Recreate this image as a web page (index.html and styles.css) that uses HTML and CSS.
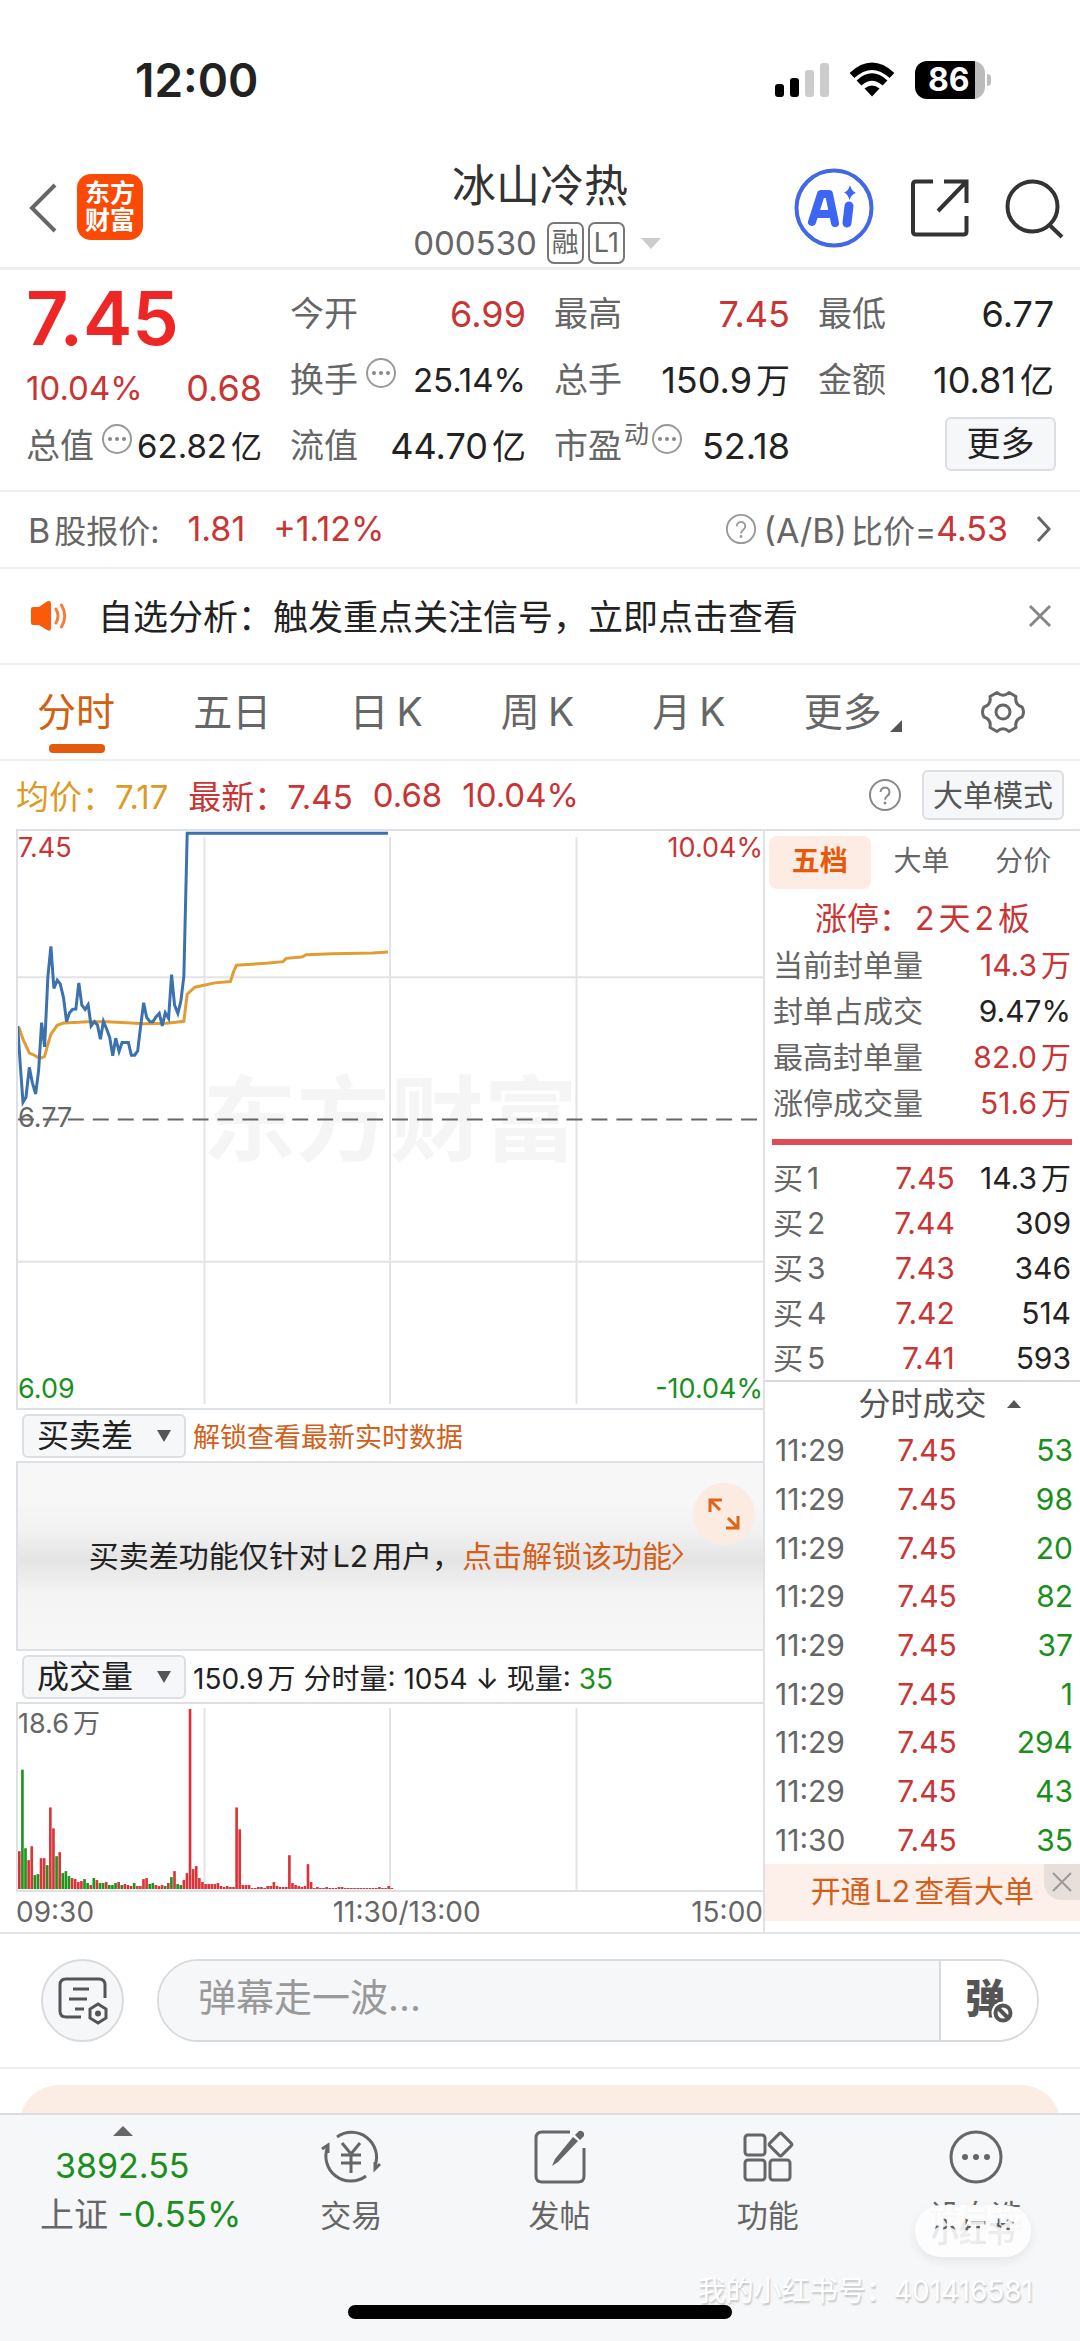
FILE: index.html
```html
<!DOCTYPE html>
<html lang="zh-CN">
<head>
<meta charset="utf-8">
<meta name="viewport" content="width=device-width, initial-scale=1">
<title>冰山冷热 000530</title>
<link rel="stylesheet" href="styles.css">
</head>
<body>
<svg class="defs" width="0" height="0" aria-hidden="true">
  <symbol id="dots" viewBox="0 0 32 32"><circle cx="16" cy="16" r="14" fill="none" stroke="#999" stroke-width="2"/><circle cx="9" cy="16" r="2" fill="#888"/><circle cx="16" cy="16" r="2" fill="#888"/><circle cx="23" cy="16" r="2" fill="#888"/></symbol>
  <symbol id="help" viewBox="0 0 34 34"><circle cx="17" cy="17" r="15" fill="none" stroke="currentColor" stroke-width="2"/><path d="M12.500 14a4.500 4.500 0 1 1 7 3.700c-1.700 1.200-2.500 2-2.500 4" fill="none" stroke="currentColor" stroke-width="2"/><circle cx="17" cy="25" r="1.500" fill="currentColor"/></symbol>
</svg>
<div class="page">
  <div class="status">
    <span class="clock">12:00</span>
    <div class="status-icons">
      <svg width="54" height="36" viewBox="0 0 54 36"><rect x="0" y="22" width="9" height="13" rx="3"/><rect x="15" y="16" width="9" height="19" rx="3"/><rect x="30" y="8" width="9" height="27" rx="3" fill="#ccc"/><rect x="45" y="1" width="9" height="34" rx="3" fill="#ccc"/></svg>
      <svg width="46" height="36" viewBox="0 0 46 36"><g fill="none" stroke="#000" stroke-width="7"><path d="M3 13.500Q23 -5 43 13.500"/><path d="M10 21Q23 9 36 21"/></g><path d="M15.500 26.500Q23 20.500 30.500 26.500L23 34.500Z"/></svg>
      <span class="battery"><span>86</span></span>
    </div>
  </div>

  <header class="head">
    <div class="head-left">
      <button class="icon-btn" aria-label="返回"><svg width="30" height="52" viewBox="0 0 30 52"><path d="M27 3L4 26L27 49" fill="none" stroke="#666" stroke-width="4"/></svg></button>
      <div class="logo"><span>东方</span><span>财富</span></div>
    </div>
    <div class="head-mid">
      <h1>冰山冷热</h1>
      <div class="code"><span>000530</span><span class="badges"><i>融</i><i>L1</i></span><svg width="20" height="11" viewBox="0 0 20 11"><path d="M0 0H20L10 11Z" fill="#ccc"/></svg></div>
    </div>
    <div class="head-right">
      <button class="icon-btn" aria-label="AI"><svg width="82" height="82" viewBox="0 0 82 82"><circle cx="41" cy="41" r="37.500" fill="none" stroke="#4169e6" stroke-width="4"/><path d="M19 55L28 27H36L42 56M24.500 47H37" fill="none" stroke="#3d66f5" stroke-width="8" stroke-linejoin="round" stroke-linecap="round"/><path d="M56 39L54 56" stroke="#3d66f5" stroke-width="9" stroke-linecap="round"/><path d="M57 18Q58.500 24 63 26Q58.500 27 56.500 33Q55 27 51 25.500Q55.500 24 57 18Z" fill="#3d66f5"/></svg></button>
      <button class="icon-btn" aria-label="分享"><svg width="58" height="58" viewBox="0 0 58 58"><path d="M22 2.500H5Q2 2.500 2 5.500V52.500Q2 55.500 5 55.500H52.500Q55.500 55.500 55.500 52.500V37M33 2.500H55.500V24M55.500 2.500L27 32" fill="none" stroke="#333" stroke-width="4"/></svg></button>
      <button class="icon-btn" aria-label="搜索"><svg width="60" height="60" viewBox="0 0 60 60"><circle cx="27.500" cy="27.500" r="25" fill="none" stroke="#333" stroke-width="4"/><path d="M44.500 46L57 58" stroke="#333" stroke-width="4"/></svg></button>
    </div>
  </header>

  <section class="quote">
    <div class="main-price"><strong>7.45</strong><div class="chg red"><span>10.04%</span><b>0.68</b></div></div>
    <div class="q"><span>今开</span><b class="red">6.99</b></div>
    <div class="q"><span>最高</span><b class="red">7.45</b></div>
    <div class="q"><span>最低</span><b>6.77</b></div>
    <div class="q"><span>换手<svg class="dots"><use href="#dots"/></svg></span><b class="small">25.14%</b></div>
    <div class="q"><span>总手</span><b>150.9<em>万</em></b></div>
    <div class="q"><span>金额</span><b>10.81<em>亿</em></b></div>
    <div class="q"><span>总值<svg class="dots"><use href="#dots"/></svg></span><b class="small">62.82<em>亿</em></b></div>
    <div class="q"><span>流值</span><b>44.70<em>亿</em></b></div>
    <div class="q pe"><span>市盈<sup>动</sup><svg class="dots"><use href="#dots"/></svg></span><b>52.18</b></div>
    <div class="q end"><button class="box-btn more">更多</button></div>
  </section>

  <section class="bshare">
    <span>B<em>股报价:</em></span><b class="red">1.81</b><b class="red">+1.12%</b>
    <a href="#" class="ratio"><svg class="help"><use href="#help"/></svg><span>(A/B)<em>比价=</em></span><b class="red">4.53</b><svg class="chev" width="16" height="28" viewBox="0 0 16 28"><path d="M2 2L13 14L2 26" fill="none" stroke="#666" stroke-width="3"/></svg></a>
  </section>

  <section class="notice">
    <svg width="38" height="32" viewBox="0 0 38 32"><path d="M1 9Q1 7 3 7H9L17 1.500Q21 0 21 4V28Q21 32 17 30L9 25H3Q1 25 1 23Z" fill="#fa5a0a"/><path d="M26 9Q30 16 26 23M31.500 5Q38 16 31.500 27" fill="none" stroke="#fa7a3a" stroke-width="3" stroke-linecap="round"/></svg>
    <p>自选分析：触发重点关注信号，立即点击查看</p>
    <button class="icon-btn" aria-label="关闭"><svg width="24" height="24" viewBox="0 0 24 24"><path d="M2 2L22 22M22 2L2 22" stroke="#888" stroke-width="3"/></svg></button>
  </section>

  <nav class="tabs">
    <a href="#" class="on">分时</a><a href="#">五日</a><a href="#">日<em>K</em></a><a href="#">周<em>K</em></a><a href="#">月<em>K</em></a><a href="#" class="tab-more">更多<svg width="12" height="12" viewBox="0 0 12 12"><path d="M12 0V12H0Z" fill="#555"/></svg></a>
    <button class="icon-btn" aria-label="设置"><svg width="46" height="44" viewBox="0 0 46 44"><path d="M17 2.500Q23 8 29 2.500L36 6.500Q34.500 14.500 42 17Q45 22 42 27Q34.500 29.500 36 37.500L29 41.500Q23 36 17 41.500L10 37.500Q11.500 29.500 4 27Q1 22 4 17Q11.500 14.500 10 6.500Z" fill="none" stroke="#666" stroke-width="3" stroke-linejoin="round"/><circle cx="23" cy="22" r="7" fill="none" stroke="#666" stroke-width="3"/></svg></button>
  </nav>

  <section class="info">
    <span class="avg">均价：7.17</span><span class="red">最新：<em>7.45</em></span><span class="red">0.68</span><span class="red">10.04%</span>
    <svg class="help dark"><use href="#help"/></svg>
    <button class="box-btn mode">大单模式</button>
  </section>

  <section class="board">
    <div class="charts">
      <div class="price">
        <svg viewBox="0 0 747 580" preserveAspectRatio="none">
          <text x="373" y="325" class="mark">东方财富</text>
          <path d="M0 147H747M0 433H747M187 6V576M373 6V576M560 6V576" stroke="#e1e4e8" stroke-width="2"/>
          <path d="M0 290H747" stroke="#666" stroke-width="2" stroke-dasharray="16 9"/>
          <g transform="scale(.3333) translate(-53 -32)" fill="none" stroke-width="9" stroke-linejoin="miter">
            <polyline stroke="#e29c34" points="55,622 68,660 87,702 100,707 115,716 124,716 133,712 143,675 152,645 171,618 190,611 236,609 260,607 320,607 380,610 430,613 500,612 552,606 562,524 585,503 645,490 692,486 702,455 710,437 800,431 850,426 860,416 907,412 920,405 1000,402 1120,400 1166,397"/>
            <polyline stroke="#3b72ad" points="52,620 60,740 68,850 77,835 87,745 96,790 106,825 115,755 124,610 133,683 143,470 152,380 161,507 171,482 180,493 190,535 199,607 208,580 217,570 227,569 236,490 245,557 255,570 264,556 273,620 283,607 292,617 301,660 310,606 320,630 329,655 338,710 347,657 357,697 366,670 385,670 394,708 404,708 413,695 422,620 431,550 440,594 450,607 459,607 468,593 478,582 487,620 496,580 506,597 515,465 524,557 534,582 543,545 552,470 562,39 1166,39"/>
          </g>
        </svg>
        <span class="lab tl red">7.45</span><span class="lab tr red">10.04%</span>
        <span class="lab ml">6.77</span>
        <span class="lab bl green">6.09</span><span class="lab br green">-10.04%</span>
      </div>
      <div class="bar-row"><button class="box-btn drop">买卖差<svg width="14" height="12" viewBox="0 0 14 12"><path d="M0 0H14L7 12Z" fill="#555"/></svg></button><a href="#" class="orange">解锁查看最新实时数据</a></div>
      <div class="locked">
        <p>买卖差功能仅针对<em>L2</em>用户，<a href="#" class="orange">点击解锁该功能<svg width="12" height="24" viewBox="0 0 12 24"><path d="M1 2L10 12L1 22" fill="none" stroke="#d9601a" stroke-width="2"/></svg></a></p>
        <button class="expand" aria-label="展开"><svg width="36" height="36" viewBox="0 0 36 36"><path d="M4 16V4H16M4 4L14 14M32 20V32H20M32 32L22 22" fill="none" stroke="#e0651c" stroke-width="3"/></svg></button>
      </div>
      <div class="bar-row totals"><button class="box-btn drop">成交量<svg width="14" height="12" viewBox="0 0 14 12"><path d="M0 0H14L7 12Z" fill="#555"/></svg></button><span>150.9<em>万</em> 分时量: 1054 ↓ 现量: <span class="green">35</span></span></div>
      <div class="volume">
        <svg id="volume" viewBox="0 0 747 187" preserveAspectRatio="none"><path d="M187 4V187M373 4V187M560 4V187" stroke="#e1e4e8" stroke-width="2"/></svg>
        <span class="lab tl">18.6<em>万</em></span>
      </div>
      <div class="axis"><span>09:30</span><span class="noon">11:30/13:00</span><span>15:00</span></div>
    </div>

    <aside class="side">
      <div class="side-tabs"><button class="on">五档</button><button>大单</button><button>分价</button></div>
      <p class="limit red">涨停：<em>2</em>天<em>2</em>板</p>
      <table class="seal">
        <tr><th>当前封单量</th><td class="red">14.3<em>万</em></td></tr>
        <tr><th>封单占成交</th><td>9.47%</td></tr>
        <tr><th>最高封单量</th><td class="red">82.0<em>万</em></td></tr>
        <tr><th>涨停成交量</th><td class="red">51.6<em>万</em></td></tr>
      </table>
      <hr>
      <table class="bids">
        <tr><th>买<em>1</em></th><td class="red">7.45</td><td>14.3<em>万</em></td></tr>
        <tr><th>买<em>2</em></th><td class="red">7.44</td><td>309</td></tr>
        <tr><th>买<em>3</em></th><td class="red">7.43</td><td>346</td></tr>
        <tr><th>买<em>4</em></th><td class="red">7.42</td><td>514</td></tr>
        <tr><th>买<em>5</em></th><td class="red">7.41</td><td>593</td></tr>
      </table>
      <button class="deals-head">分时成交<svg width="14" height="8" viewBox="0 0 14 8"><path d="M0 8H14L7 0Z" fill="#555"/></svg></button>
      <table class="deals">
        <tr><th>11:29</th><td class="red">7.45</td><td class="green">53</td></tr>
        <tr><th>11:29</th><td class="red">7.45</td><td class="green">98</td></tr>
        <tr><th>11:29</th><td class="red">7.45</td><td class="green">20</td></tr>
        <tr><th>11:29</th><td class="red">7.45</td><td class="green">82</td></tr>
        <tr><th>11:29</th><td class="red">7.45</td><td class="green">37</td></tr>
        <tr><th>11:29</th><td class="red">7.45</td><td class="green">1</td></tr>
        <tr><th>11:29</th><td class="red">7.45</td><td class="green">294</td></tr>
        <tr><th>11:29</th><td class="red">7.45</td><td class="green">43</td></tr>
        <tr><th>11:30</th><td class="red">7.45</td><td class="green">35</td></tr>
      </table>
      <div class="promo"><a href="#" class="orange">开通<em>L2</em>查看大单</a><button aria-label="关闭"><svg width="22" height="22" viewBox="0 0 22 22"><path d="M2 2L20 20M20 2L2 20" stroke="#999" stroke-width="2"/></svg></button></div>
    </aside>
  </section>

  <section class="comment">
    <button class="round" aria-label="弹幕设置"><svg width="52" height="50" viewBox="0 0 52 50"><g fill="none" stroke="#555" stroke-width="3"><path d="M24 41H9Q3 41 3 35V9Q3 3 9 3H42Q48 3 48 9V22"/><path d="M16 13H32M12 23H30M18 33H27"/><path d="M41 28L49 33V42L41 47L33 42V33Z"/></g><circle cx="41" cy="37.500" r="3" fill="#555"/></svg></button>
    <div class="field">
      <input type="text" placeholder="弹幕走一波..." aria-label="弹幕">
      <button aria-label="关闭弹幕"><span>弹</span><svg width="24" height="24" viewBox="0 0 24 24"><circle cx="12" cy="12" r="11.500" fill="#fff"/><circle cx="12" cy="12" r="7.500" fill="none" stroke="#555" stroke-width="4"/><path d="M7 7L17 17" stroke="#555" stroke-width="4"/></svg></button>
    </div>
  </section>

  <div class="peek"><div></div></div>

  <footer class="dock">
    <a href="#" class="index"><svg width="20" height="10" viewBox="0 0 20 10"><path d="M0 10H20L10 0Z" fill="#666"/></svg><b class="green">3892.55</b><span>上证 <i class="green">-0.55%</i></span></a>
    <a href="#"><svg width="60" height="56" viewBox="0 0 60 56"><g fill="none" stroke="#666" stroke-width="3"><path d="M16 8A25 25 0 0 1 54 37M45 47A25 25 0 0 1 7 17M1 20L7 16V24M59 35L54 40V33"/><path d="M21 14L30 25L39 14M20 26H40M20 34H40M30 25V44"/></g></svg><span>交易</span></a>
    <a href="#"><svg width="60" height="56" viewBox="0 0 60 56"><path d="M40 3H12Q6 3 6 9V47Q6 53 12 53H48Q54 53 54 47V19" fill="none" stroke="#666" stroke-width="3"/><path d="M22 37L25 30L43 8L48 12L28 33ZM45 6L49 2Q52 1 54 4V7L50 11Z" fill="#666"/></svg><span>发帖</span></a>
    <a href="#"><svg width="60" height="56" viewBox="0 0 60 56"><g fill="none" stroke="#666" stroke-width="3"><rect x="7" y="6" width="20" height="20" rx="3"/><rect x="7" y="31" width="20" height="20" rx="3"/><rect x="32" y="31" width="20" height="20" rx="3"/><rect x="34" y="7" width="17" height="17" rx="2" transform="rotate(45 42.500 15.500)"/></g></svg><span>功能</span></a>
    <a href="#"><svg width="60" height="56" viewBox="0 0 60 56"><circle cx="30" cy="28" r="25" fill="none" stroke="#666" stroke-width="3"/><circle cx="19" cy="28" r="3" fill="#666"/><circle cx="30" cy="28" r="3" fill="#666"/><circle cx="41" cy="28" r="3" fill="#666"/></svg><span>设自选</span></a>
    <svg class="stamp" width="116" height="52" viewBox="0 0 116 52"><mask id="cut"><rect width="116" height="52" fill="#fff"/><text x="58" y="38" class="cut-text">小红书</text></mask><rect width="116" height="52" rx="26" fill="#fefefe" mask="url(#cut)"/></svg>
    <span class="owner">我的小红书号：401416581</span>
    <span class="home"></span>
  </footer>
</div>
<script src="chart.js"></script>
</body>
</html>
```
FILE: styles.css
```css
* { box-sizing: border-box; }
body { margin: 0; background: #fff; color: #222; font-family: Inter, "Noto Sans CJK SC", sans-serif; }
button { font: inherit; color: inherit; background: none; border: 0; padding: 0; margin: 0; }
a { color: inherit; text-decoration: none; }
em, i { font-style: normal; }
h1, p { margin: 0; font-weight: 400; }
b { font-weight: 400; }
th { font-weight: 400; text-align: left; }
svg { display: block; flex: none; }
.defs { position: absolute; }
.red { color: #c93434; }
.green { color: #1a8f1c; }
.orange { color: #d2601a; }
.page { min-height: 100vh; display: flex; flex-direction: column; overflow: hidden; }

.status { display: flex; justify-content: space-between; align-items: center; height: 160px; padding: 0 95px 0 135px; }
.clock { font-size: 46px; font-weight: 600; }
.status-icons { display: flex; align-items: center; gap: 20px; }
.battery { position: relative; width: 70px; height: 38px; border-radius: 12px; background: linear-gradient(90deg, #000 60px, #bbb 60px); color: #fff; font-size: 32px; font-weight: 700; line-height: 38px; padding-left: 13px; }
.battery::after { content: ""; position: absolute; right: -6px; top: 13px; width: 4px; height: 12px; border-radius: 0 4px 4px 0; background: #bbb; }

.head { display: grid; grid-template-columns: minmax(0, 1fr) auto minmax(0, 1fr); height: 110px; border-bottom: 3px solid #eee; padding: 0 15px; }
.head-left { display: flex; align-items: flex-start; gap: 19px; padding: 14px 0 0 13px; }
.head-left .icon-btn { padding-top: 8px; }
.logo { display: flex; flex-direction: column; justify-content: center; width: 66px; height: 66px; border-radius: 14px; background: #fb4a05; color: #fff; font-size: 25px; font-weight: 700; line-height: 27px; text-align: center; }
.head-mid { text-align: center; }
.head-mid h1 { font-size: 44px; line-height: 52px; color: #333; }
.code { display: flex; align-items: center; justify-content: center; gap: 10px; height: 58px; font-size: 33px; color: #666; padding: 4px 6px 0 0; }
.code svg { margin-left: 6px; }
.badges { display: flex; gap: 4px; }
.badges i { width: 37px; height: 42px; border: 2px solid #777; border-radius: 7px; font-size: 27px; line-height: 38px; text-align: center; }
.head-right { display: flex; align-items: flex-start; justify-content: flex-end; gap: 36px; padding-top: 7px; }
.head-right .icon-btn + .icon-btn { padding-top: 12px; }

.quote { display: grid; grid-template-columns: repeat(4, 1fr); grid-template-rows: repeat(3, 66px); column-gap: 28px; padding: 11px 26px; border-bottom: 2px solid #eee; }
.main-price { grid-row: span 2; color: #ee2626; }
.main-price strong { display: block; font-size: 74px; font-weight: 600; line-height: 74px; }
.chg { display: flex; align-items: center; justify-content: space-between; font-size: 33px; line-height: 66px; }
.chg b { font-size: 36px; }
.q { display: flex; align-items: center; justify-content: space-between; min-width: 0; font-size: 36px; white-space: nowrap; line-height: 66px; }
.q > span { display: flex; align-items: center; color: #666; font-size: 34px; }
.q em { font-size: 34px; margin-left: 4px; }
.q .small { font-size: 33px; }
.q .small em { font-size: 31px; }
.dots { width: 32px; height: 32px; margin: -14px 0 0 7px; }
.q sup { font-size: 25px; line-height: 34px; margin: -24px 0 0 2px; }
.pe .dots { margin-left: 2px; }
.end { justify-content: flex-end; }
.box-btn { border: 2px solid #dcdee2; border-radius: 6px; background: #f6f7f9; }
.more { width: 111px; height: 54px; font-size: 34px; line-height: 48px; margin: -4px -2px 0 0; }

.bshare { display: flex; align-items: center; gap: 28px; height: 77px; padding: 0 28px 2px; border-bottom: 2px solid #eee; color: #666; font-size: 34px; }
.bshare em { font-size: 32px; margin-left: 4px; }
.ratio { display: flex; align-items: center; margin-left: auto; }
.help { width: 32px; height: 32px; color: #999; }
.ratio span { margin-left: 7px; }
.chev { margin-left: 28px; }

.notice { display: flex; align-items: center; height: 96px; padding: 0 28px 0 30px; border-bottom: 2px solid #eee; font-size: 35px; color: #222; }
.notice p { flex: 1; margin-left: 30px; padding-bottom: 4px; }

.tabs { display: flex; align-items: center; justify-content: space-between; height: 96px; padding: 0 54px 0 37px; border-bottom: 2px solid #eee; color: #666; font-size: 39px; }
.tabs a { position: relative; line-height: 94px; }
.tabs em { margin-left: 8px; }
.tabs .on { color: #d2600f; }
.tabs .on::after { content: ""; position: absolute; left: 12px; right: 10px; bottom: 6px; height: 9px; border-radius: 4px; background: #e5590d; }
.tab-more { display: flex; align-items: center; gap: 8px; }
.tab-more svg { margin-top: 28px; }

.info { display: flex; align-items: center; gap: 20px; height: 68px; padding: 0 16px; font-size: 33px; }
.info span { padding-bottom: 1px; }
.avg { color: #dd9a26; }
.info .dark { width: 34px; height: 34px; color: #888; margin-left: auto; }
.mode { height: 50px; padding: 0 9px; font-size: 30px; line-height: 44px; color: #555; }

.board { display: grid; grid-template-columns: minmax(0, 1fr) 315px; border-bottom: 2px solid #e2e4e6; }
.charts { padding-left: 16px; border-right: 2px solid #dfe1e4; }
.price, .volume { position: relative; border: solid #dde0e4; border-width: 2px 0 2px 2px; }
.price svg { width: 100%; height: 577px; }
.volume svg { width: 100%; height: 186px; }
.mark { font-size: 94px; font-weight: 700; fill: #f5f5f6; text-anchor: middle; }
.lab { position: absolute; font-size: 27px; line-height: 32px; }
.tl { left: 0; top: 1px; }
.tr { right: 0; top: 1px; }
.ml { left: 0; top: 271px; color: #666; }
.bl { left: 0; bottom: 3px; }
.br { right: 0; bottom: 3px; }
.volume .lab { color: #666; top: 4px; }
.volume em { margin-left: 4px; }
.bar-row { display: flex; align-items: center; gap: 7px; height: 51px; padding-left: 6px; font-size: 27px; white-space: nowrap; }
.bar-row em { margin-left: 4px; }
.totals { font-size: 28px; }
.drop { display: flex; align-items: center; justify-content: space-between; width: 164px; height: 44px; padding: 0 13px; font-size: 32px; line-height: 38px; }
.locked { position: relative; display: flex; align-items: center; justify-content: center; height: 190px; border: 2px solid #dde0e4; border-right: 0; background: linear-gradient(#f7f7f7 20%, #f1f1f1 38%, #e4e4e4 52%, #f4f4f4 70%, #f7f7f7); font-size: 30px; }
.locked p { padding: 0 8px 4px 0; white-space: nowrap; }
.locked em { margin: 0 4px; }
.locked a { display: inline-flex; align-items: center; }
.expand { position: absolute; right: 8px; top: 20px; display: grid; place-items: center; width: 62px; height: 62px; border-radius: 50%; background: #fbebe1; }
.axis { display: flex; justify-content: space-between; font-size: 28px; line-height: 40px; color: #666; }
.noon { margin-left: 28px; }

.side { border-top: 2px solid #dde0e4; font-size: 30px; }
.side-tabs { display: flex; padding: 5px 6px 0 4px; color: #666; font-size: 28px; }
.side-tabs button { flex: 1; height: 53px; border-radius: 8px; line-height: 51px; padding-bottom: 2px; }
.side-tabs .on { background: #fdece3; color: #e5590d; font-weight: 700; }
.limit { height: 53px; padding-top: 7px; font-size: 32px; line-height: 46px; text-align: center; }
.limit em { margin: 0 4px; }
table { width: 100%; border-collapse: collapse; white-space: nowrap; }
td { text-align: right; padding: 0; }
th { color: #666; padding: 0; }
td em, th em { margin-left: 4px; }
.seal tr { height: 46px; }
.seal, .bids { margin: 0 9px 0 8px; width: calc(100% - 17px); line-height: 40px; }
.side hr { height: 6px; border: 0; margin: 13px 8px 10px 7px; background: #dc4c50; }
.bids tr { height: 45px; }
.bids th, .deals th { width: 30%; }
.bids td:nth-child(2), .deals td:nth-child(2) { width: 31%; }
.deals-head { display: flex; align-items: center; justify-content: center; gap: 20px; width: 100%; height: 46px; padding-left: 34px; border-top: 2px solid #d5d8dc; color: #555; font-size: 32px; line-height: 42px; }
.deals { height: 438px; margin: 0 7px 0 10px; width: calc(100% - 17px); line-height: 40px; }
.promo { position: relative; height: 57px; margin-bottom: 8px; background: #fdefe9; font-size: 30px; line-height: 54px; text-align: center; }
.promo em { margin: 0 4px; }
.promo button { position: absolute; right: 0; top: 0; display: grid; place-items: center; width: 36px; height: 36px; border-radius: 0 0 0 18px; background: #e8dfda; }

.comment { display: flex; align-items: center; gap: 33px; height: 135px; padding: 0 41px; border-bottom: 2px solid #eee; }
.round { display: grid; place-items: center; width: 83px; height: 83px; border: 2px solid #d8dadd; border-radius: 50%; background: #f6f7f9; }
.field { flex: 1; display: flex; height: 83px; border: 2px solid #d8dadd; border-radius: 42px; overflow: hidden; }
.field input { flex: 1; min-width: 0; border: 0; padding: 0 39px 8px; background: #f6f7f9; font: 38px Inter, "Noto Sans CJK SC", sans-serif; }
.field input::placeholder { color: #999; opacity: 1; }
.field button { position: relative; width: 98px; border-left: 2px solid #d8dadd; background: #fff; color: #555; font-size: 40px; font-weight: 900; line-height: 72px; text-align: left; padding: 0 0 4px 24px; }
.field button svg { position: absolute; right: 22px; bottom: 15px; }

.peek { height: 44px; padding: 16px 19px 0; overflow: hidden; }
.peek div { height: 80px; border-radius: 40px; background: #fcede4; }

.dock { position: relative; flex: 1; display: grid; grid-template-columns: 247fr 208fr 208fr 208fr 208fr; align-items: start; min-height: 200px; border-top: 2px solid #dcdde1; background: #f6f7f9; color: #666; font-size: 31px; }
.dock a { display: flex; flex-direction: column; align-items: center; padding-top: 14px; line-height: 62px; white-space: nowrap; }
.dock .index { align-items: flex-start; padding: 11px 0 0 40px; font-size: 34px; }
.index svg { margin-left: 73px; }
.index b { margin-left: 15px; line-height: 42px; padding-top: 9px; }
.index span { line-height: 54px; }
.index i { font-size: 35px; }
.stamp { position: absolute; right: 49px; top: 90px; opacity: .96; filter: drop-shadow(0 4px 6px rgba(0, 0, 0, .08)); }
.cut-text { font-size: 28px; font-weight: 700; text-anchor: middle; }
.owner { position: absolute; right: 47px; bottom: 30px; color: #fff; font-size: 28px; line-height: 40px; text-shadow: 1px 2px 2px rgba(0, 0, 0, .22); }
.home { position: absolute; left: 50%; bottom: 22px; width: 384px; margin-left: -192px; height: 14px; border-radius: 7px; background: #000; }
```
FILE: chart.js
```js
// Turnover per minute, first two hours: height, with "g" for a falling minute.
const minutes = ("38 120g 41g 29 43 14g 15g 31 31 24g 82 61 33g 37 16g 18g 13g 11 10 7 8 10g 6g 4 11g 9 6g 6g 7 4g " +
  "4g 6g 7 4g 5 4 3 6g 3 3 10 11 5g 6g 4 3 4 3g 6 12g 18 5g 4g 9 16 181 20 23 11 7 5 5 5 5 6 3 2 3 2 2 82 60 4 4 4 " +
  "1 1 2 2 1 3 3 7 3 2 2 2 34 6 4 3 2 3 25 7 1 2 1 1 2 1 1 1 2 2 1 1 1 1 1 1 1 1 1 1 1 2 1 1 3 1").split(" ");
const svg = document.getElementById("volume");
const step = 747 / 240;
minutes.forEach((entry, i) => {
  const bar = document.createElementNS("http://www.w3.org/2000/svg", "rect");
  const height = parseInt(entry, 10);
  bar.setAttribute("x", i * step);
  bar.setAttribute("y", 186 - height);
  bar.setAttribute("width", step * 0.85);
  bar.setAttribute("height", height);
  bar.setAttribute("fill", entry.endsWith("g") ? "#1a961a" : "#dc3338");
  svg.appendChild(bar);
});
```
